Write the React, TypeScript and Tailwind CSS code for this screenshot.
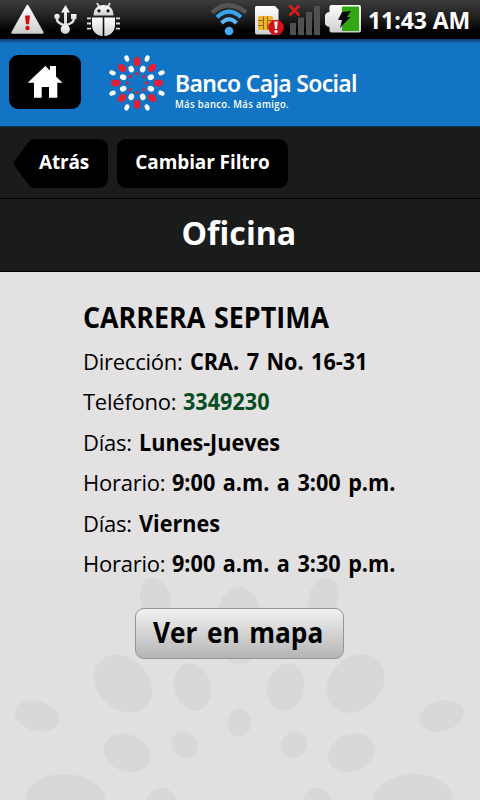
import type { ReactNode } from "react";

const petals = [
  { cx: 155.5, cy: 600, rx: 15, ry: 23, rotate: -15 },
  { cx: 123, cy: 683.5, rx: 32.5, ry: 25.5, rotate: 45 },
  { cx: 192.7, cy: 687, rx: 18.3, ry: 23.8, rotate: -15 },
  { cx: 37, cy: 716, rx: 22.8, ry: 15, rotate: 15 },
  { cx: 127, cy: 753, rx: 24, ry: 18.5, rotate: 22 },
  { cx: 184.7, cy: 745, rx: 14, ry: 12.3, rotate: 45 },
  { cx: 65.5, cy: 800, rx: 40, ry: 26, rotate: 3 },
  { cx: 161.5, cy: 803, rx: 15, ry: 15, rotate: 0 },
];

const details = [
  { label: "Dirección:", value: "CRA. 7 No. 16-31" },
  { label: "Teléfono:", value: "3349230", isPhone: true },
  { label: "Días:", value: "Lunes-Jueves" },
  { label: "Horario:", value: "9:00 a.m. a 3:00 p.m." },
  { label: "Días:", value: "Viernes" },
  { label: "Horario:", value: "9:00 a.m. a 3:30 p.m." },
];

const eighths = [0, 45, 90, 135, 180, 225, 270, 315];

function StatusBar() {
  return (
    <div className="flex h-[39px] items-center justify-between bg-linear-to-b from-[#3d3d3d] via-[#1c1c1c] to-black pr-[10px] pl-[8px]">
      <svg className="h-[39px] w-[112px]" viewBox="8 0 112 39">
        <defs>
          <linearGradient id="metal" x1="0" y1="0" x2="0" y2="1">
            <stop offset="0" stopColor="#fff" />
            <stop offset="1" stopColor="#cfcfcf" />
          </linearGradient>
        </defs>
        <path
          d="M27.5 6 42.5 32.5H12.5Z"
          fill="url(#metal)"
          stroke="url(#metal)"
          strokeWidth="2.4"
          strokeLinejoin="round"
        />
        <path d="M25 15.5h5l-1 8.8h-3z" fill="#d01010" />
        <circle cx="27.5" cy="28" r="2.2" fill="#d01010" />
        <g fill="url(#metal)">
          <path d="M65.5 5 70 12.5h-3V27h-3V12.5h-3z" />
          <circle cx="65.3" cy="29.3" r="4.6" />
          <circle cx="57" cy="16.5" r="2.7" />
          <path d="M71 14h5.5v5.2H71z" />
        </g>
        <path
          d="M57 17v2.5c0 3 3.5 4.5 8.3 6 4.8-1.5 8.4-3 8.4-6V17"
          fill="none"
          stroke="#e6e6e6"
          strokeWidth="2.4"
        />
        <path
          d="M97 3l2.3 4M110 3l-2.3 4M91 18.4h-4M91 23.5h-4M91 28.6h-4M116 18.4h4M116 23.5h4M116 28.6h4"
          stroke="#ddd"
          strokeWidth="1.8"
        />
        <path
          d="M93.5 15.5C93.5 9 97.5 5 103.5 5S113.5 9 113.5 15.5Z"
          fill="url(#metal)"
        />
        <circle cx="99" cy="10.8" r="1.6" fill="#111" />
        <circle cx="108" cy="10.8" r="1.6" fill="#111" />
        <path
          d="M92 17.5h10.7V36C96 35.5 92 31 92 25zM104.3 17.5H115V25c0 6-4 10.5-10.7 11z"
          fill="url(#metal)"
        />
      </svg>
      <div className="flex items-center">
        <svg className="h-[39px] w-[152px]" viewBox="211 0 152 39">
          <g fill="none">
            <path d="M212 12.5Q228.5-2 246 12.5" stroke="#555" strokeWidth="4.5" />
            <path d="M217 17.2Q229 6 241 17.2" stroke="#35a4f2" strokeWidth="4.2" />
            <path d="M221.5 23Q229 15.5 236.5 23" stroke="#5cb8f8" strokeWidth="4" />
          </g>
          <circle cx="229" cy="31" r="4.3" fill="#45adf5" />
          <path
            d="M257.5 6H275l3.5 3.5V32.5a2 2 0 0 1-2 2H257a2 2 0 0 1-2-2V8a2 2 0 0 1 2.5-2z"
            fill="url(#metal)"
          />
          <rect x="258" y="16" width="15" height="14" rx="1.5" fill="#efb42c" />
          <path
            d="M258 20.5h5.5v-4M258 25.5h5.5v4M273 20.5h-5.5v-4M273 25.5h-5.5v4M263.5 20.5v5M267.5 20.5v5"
            fill="none"
            stroke="#9a6208"
            strokeWidth="1"
          />
          <circle cx="276" cy="27.5" r="7.8" fill="#d3131c" />
          <path d="M274.3 21.5h3.4l-.7 7.500h-2z" fill="#fff" />
          <circle cx="276" cy="31.5" r="1.6" fill="#fff" />
          <path d="M290 23h6v12h-6zM298 17.5h6V35h-6zM306 12h6v23h-6zM314 6h6v29h-6z" fill="#505050" />
          <path d="M289.5 5.5l10 10M299.5 5.5l-10 10" stroke="#d91c1c" strokeWidth="2.7" />
          <path
            d="M331.5 5H359a2 2 0 0 1 2 2v23.5a2 2 0 0 1-2 2H331.5a2 2 0 0 1-2-2V27c-3-.5-4.5-2-4.5-4v-7c0-2 1.5-3.5 4.5-4V7a2 2 0 0 1 2-2z"
            fill="url(#metal)"
          />
          <path d="M342 6.5h17V31h-17z" fill="#31a812" />
          <path d="M342 12l9-1-4 6h3.5L340 28l2-8h-4z" fill="#080808" />
        </svg>
        <span className="ml-[5px] w-[102px] origin-left scale-x-[0.96] text-[24px] leading-[39px] font-bold tracking-[-0.1px] whitespace-nowrap text-white">
          11:43 AM
        </span>
      </div>
    </div>
  );
}

function Logo() {
  return (
    <svg className="h-[58px] w-[58px]" viewBox="-29 -29 58 58">
      {eighths.map((angle) => (
        <g key={angle}>
          <g transform={`rotate(${angle})`} fill="#e11f38">
            <ellipse cy="-21.3" rx="3.4" ry="4.6" />
            <circle cy="-9.5" r="1.6" />
          </g>
          <g transform={`rotate(${angle + 22.5})`} fill="#fff">
            <ellipse cy="-26.5" rx="2.3" ry="3.3" />
            <ellipse cy="-15" rx="2.7" ry="3.3" />
          </g>
        </g>
      ))}
    </svg>
  );
}

function Header() {
  return (
    <header className="flex h-[88px] border-b border-[#0a3050] bg-[linear-gradient(#0b3c6c,#1274c5_5px)]">
      <button className="mt-[16px] ml-[9px] h-[54px] w-[72px] rounded-[9px] bg-black">
        <svg className="h-[54px] w-[72px]" viewBox="9 55 72 54">
          <path
            d="M45.3 66 50 70.500V66h6v10.500l6.500 6.200H57.300V97.700H49V87h-7.300v10.700H34V82.700H27.700Z"
            fill="#fff"
          />
        </svg>
      </button>
      <div className="mt-[15px] ml-[27px]">
        <Logo />
      </div>
      <div className="mt-[28px] ml-[9px] w-[190px] text-white">
        <div className="h-[32px] origin-left scale-x-[0.955] font-['Noto_Sans',sans-serif] text-[24px] leading-[31px] font-semibold tracking-[-0.7px] whitespace-nowrap">
          Banco Caja Social
        </div>
        <div className="h-[12px] origin-left scale-x-[0.945] text-[10px] leading-[11px] font-semibold tracking-[0.4px] whitespace-nowrap">
          Más banco. Más amigo.
        </div>
      </div>
    </header>
  );
}

function Toolbar() {
  return (
    <nav className="flex h-[72px] border-b border-black bg-[#1a1c1b] pt-[12px] pl-[14px]">
      <button className="flex h-[49px] w-[94px]">
        <svg className="h-[49px] w-[20px]" viewBox="0 0 20 49">
          <path d="M20 0C17 0 16 2 14 4L1 21.500Q-1 24.500 1 27.500L14 45C16 47 17 49 20 49Z" />
        </svg>
        <span className="h-[49px] w-[74px] rounded-r-[9px] bg-black pl-[5px] text-left text-[19px] leading-[46px] font-bold tracking-[-0.2px] whitespace-nowrap text-white">
          Atrás
        </span>
      </button>
      <button className="ml-[9px] flex h-[49px] w-[171px] justify-center rounded-[9px] bg-black text-[19px] leading-[46px] font-bold tracking-[-0.1px] whitespace-nowrap text-white">
        Cambiar Filtro
      </button>
    </nav>
  );
}

function Backdrop() {
  return (
    <svg className="absolute inset-0 h-[528px] w-[480px]" viewBox="0 272 480 528">
      <path d="M0 562h480v238H0z" fill="#e0e0e0" />
      <g fill="#d8d8d8">
        {petals.map(({ cx, cy, rx, ry, rotate }) => (
          <g key={cx}>
            <ellipse cx={cx} cy={cy} rx={rx} ry={ry} transform={`rotate(${rotate} ${cx} ${cy})`} />
            <ellipse
              cx={478.5 - cx}
              cy={cy}
              rx={rx}
              ry={ry}
              transform={`rotate(${-rotate} ${478.5 - cx} ${cy})`}
            />
          </g>
        ))}
        <ellipse cx="239" cy="626" rx="24" ry="39" />
        <ellipse cx="239.3" cy="722.5" rx="12" ry="14" />
      </g>
    </svg>
  );
}

function DetailRow({ label, children }: { label: string; children: ReactNode }) {
  return (
    <div className="flex h-[40.4px] items-baseline leading-[40px] whitespace-nowrap">
      <span className="text-[22px] tracking-[-0.25px]">{label}</span>
      <span className="ml-[7px] origin-left scale-x-[0.94] text-[23px] font-bold [word-spacing:2px]">
        {children}
      </span>
    </div>
  );
}

export default function App() {
  return (
    <div className="h-[800px] w-[480px] overflow-hidden bg-[#e3e1e2] font-['Open_Sans','Noto_Sans',sans-serif] text-black">
      <StatusBar />
      <Header />
      <Toolbar />
      <h1 className="flex h-[73px] justify-center border-b border-black bg-[#1a1c1b] text-[33px] leading-[67px] font-bold text-white">
        <span className="mr-[2px] scale-x-[0.975]">Oficina</span>
      </h1>
      <main className="relative h-[528px]">
        <Backdrop />
        <div className="relative pt-[25px] pl-[83px]">
          <h2 className="h-[44px] origin-left scale-x-[0.925] text-[29px] leading-[40px] font-bold whitespace-nowrap [word-spacing:2px]">
            CARRERA SEPTIMA
          </h2>
          {details.map(({ label, value, isPhone }, index) => (
            <DetailRow key={index} label={label}>
              {isPhone ? <span className="text-[#064d22]">{value}</span> : value}
            </DetailRow>
          ))}
          <button className="mt-[25px] ml-[52px] flex h-[51px] w-[209px] justify-center rounded-[9px] border border-[#959595] bg-linear-to-b from-[#f2f2f2] to-[#b5b5b5] text-[29px] leading-[46px] font-bold whitespace-nowrap">
            <span className="mr-[2px] scale-x-[0.905] [word-spacing:3px]">Ver en mapa</span>
          </button>
        </div>
      </main>
    </div>
  );
}
